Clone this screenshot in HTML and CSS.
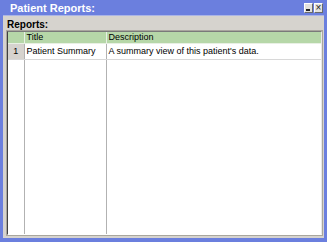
FILE: index.html
```html
<!DOCTYPE html>
<html lang="en">
<head>
    <meta charset="UTF-8">
    <title>Patient Reports</title>
    <link rel="stylesheet" href="styles.css">
</head>
<body>
    <div class="window">
        <div class="titlebar">
            <span class="title">Patient Reports:</span>
            <div class="title-buttons">
                <span class="tbtn min"></span>
                <span class="tbtn close">&#215;</span>
            </div>
        </div>
        <div class="panel">
            <div class="label">Reports:</div>
            <div class="grid">
                <table>
                    <colgroup>
                        <col class="c-num">
                        <col class="c-title">
                        <col>
                    </colgroup>
                    <thead>
                        <tr>
                            <th class="num"></th>
                            <th>Title</th>
                            <th>Description</th>
                        </tr>
                    </thead>
                    <tbody>
                        <tr>
                            <td class="num">1</td>
                            <td>Patient Summary</td>
                            <td>A summary view of this patient's data.</td>
                        </tr>
                        <tr class="filler">
                            <td class="num"></td>
                            <td></td>
                            <td></td>
                        </tr>
                    </tbody>
                </table>
            </div>
        </div>
    </div>
</body>
</html>
```

FILE: styles.css
```css
html, body {
    margin: 0;
    padding: 0;
    background-color: #fff;
}
.window {
    width: 327px;
    height: 242px;
    box-sizing: border-box;
    background-color: #6b7fde;
    padding: 0 3px 4px 3px;
    display: flex;
    flex-direction: column;
    font-family: "Liberation Sans", Arial, sans-serif;
    font-size: 9px;
}
.titlebar {
    height: 15px;
    display: flex;
    align-items: center;
    justify-content: space-between;
    color: #fff;
}
.title {
    font-weight: bold;
    font-size: 11px;
    padding-left: 7px;
}
.title-buttons {
    display: flex;
    gap: 1px;
    padding-right: 1px;
}
.tbtn {
    width: 7px;
    height: 8px;
    background-color: #e4e2dc;
    border: 1px solid #fff;
    border-right-color: #6a6a6a;
    border-bottom-color: #6a6a6a;
    color: #222;
    font-size: 10px;
    line-height: 8px;
    text-align: center;
    position: relative;
}
.tbtn.min::after {
    content: "";
    position: absolute;
    left: 1px;
    bottom: 1px;
    width: 4px;
    height: 2px;
    background-color: #222;
}
.panel {
    flex: 1;
    background-color: #d6d3ce;
    border-top: 1px solid #aab4e6;
    padding: 3px 2px 3px 4px;
    display: flex;
    flex-direction: column;
}
.label {
    font-weight: bold;
    font-size: 10px;
    height: 12px;
    line-height: 12px;
    margin-bottom: 0;
}
.grid {
    flex: 1;
    background-color: #fff;
    border: 1px solid #fff;
    border-top-color: #7a7a7a;
    border-left-color: #404040;
    border-right-color: #e8e8e8;
    box-shadow: 0 0 0 1px #a9a69e;
    display: flex;
}
table {
    border-collapse: collapse;
    table-layout: fixed;
    width: 100%;
    height: 100%;
}
.c-num {
    width: 16px;
}
.c-title {
    width: 82px;
}
th, td {
    border-right: 1px solid #b2b2b2;
    padding: 0 2px;
    text-align: left;
    white-space: nowrap;
    overflow: hidden;
    font-weight: normal;
}
th {
    background-color: #b6d7a8;
    height: 11px;
    line-height: 11px;
    border-bottom: 1px solid #e8f0e4;
    border-right-color: #e8f0e4;
}
td {
    height: 15px;
    line-height: 15px;
    border-bottom: 1px solid #d8d8d8;
}
th:last-child, td:last-child {
    border-right: none;
}
.num {
    text-align: center;
}
td.num {
    background-color: #d6d3ce;
}
.filler td {
    height: auto;
    border-bottom: none;
}
.filler td.num {
    background-color: #fff;
}
```
